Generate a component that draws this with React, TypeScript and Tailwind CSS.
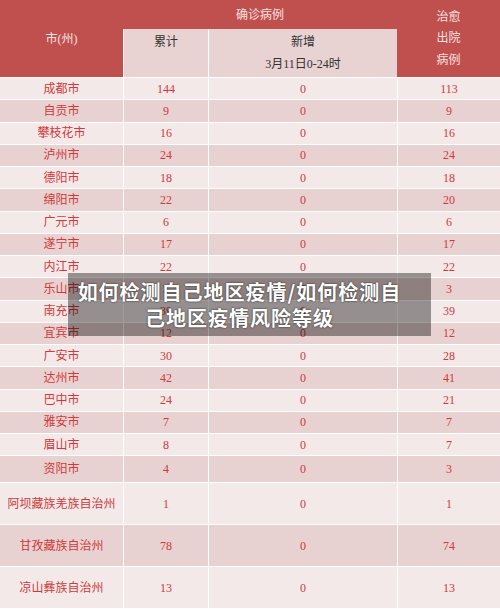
import React from 'react';

type Row = [string, string, string, string];

const rows: Row[] = [
  ['成都市', '144', '0', '113'],
  ['自贡市', '9', '0', '9'],
  ['攀枝花市', '16', '0', '16'],
  ['泸州市', '24', '0', '24'],
  ['德阳市', '18', '0', '18'],
  ['绵阳市', '22', '0', '20'],
  ['广元市', '6', '0', '6'],
  ['遂宁市', '17', '0', '17'],
  ['内江市', '22', '0', '22'],
  ['乐山市', '3', '0', '3'],
  ['南充市', '39', '0', '39'],
  ['宜宾市', '12', '0', '12'],
  ['广安市', '30', '0', '28'],
  ['达州市', '42', '0', '41'],
  ['巴中市', '24', '0', '21'],
  ['雅安市', '7', '0', '7'],
  ['眉山市', '8', '0', '7'],
];

const tall: Row[] = [
  ['阿坝藏族羌族自治州', '1', '0', '1'],
  ['甘孜藏族自治州', '78', '0', '74'],
  ['凉山彝族自治州', '13', '0', '13'],
];

const font = { fontFamily: '"Liberation Serif", "Noto Sans CJK SC", serif' };

const DataRow = ({ row, index, height }: { row: Row; index: number; height: string }) => (
  <div
    className={`grid grid-cols-[123px_84px_188px_1fr] gap-x-px text-[12px] text-[#d03a3a] ${height}`}
  >
    {row.map((cell, i) => (
      <div
        key={i}
        className={`flex items-center justify-center ${index % 2 === 0 ? 'bg-[#f3e9e9]' : 'bg-[#e8d1d1]'}`}
      >
        {cell}
      </div>
    ))}
  </div>
);

export default function App() {
  return (
    <div className="relative w-[500px] h-[609px] overflow-hidden bg-white" style={font}>
      {/* header */}
      <div className="flex h-[77px] bg-[#c0504d] text-[12px] text-[#f8e2e2]">
        <div className="w-[123px] flex items-center justify-center">市(州)</div>
        <div className="w-[274px] flex flex-col">
          <div className="h-[29px] flex items-center justify-center">确诊病例</div>
          <div className="flex-1 flex gap-x-px bg-white pl-px text-[#333]">
            <div className="w-[84px] bg-[#e8d2d2] pt-[3px] text-center leading-[21.5px]">累计</div>
            <div className="flex-1 bg-[#e8d2d2] pt-[3px] text-center leading-[21.5px]">
              <div>新增</div>
              <div>3月11日0-24时</div>
            </div>
          </div>
        </div>
        <div className="flex-1 flex flex-col items-center justify-center leading-[21.5px] pt-px">
          <div>治愈</div>
          <div>出院</div>
          <div>病例</div>
        </div>
      </div>

      {/* body */}
      <div className="flex flex-col gap-y-px pt-px">
        {rows.map((r, i) => (
          <DataRow key={r[0]} row={r} index={i} height="h-[21.25px]" />
        ))}
        <DataRow row={['资阳市', '4', '0', '3']} index={17} height="h-[26px]" />
        {tall.map((r, i) => (
          <DataRow key={r[0]} row={r} index={18 + i} height="h-[41px]" />
        ))}
      </div>

      {/* title overlay */}
      <div className="absolute left-[68px] top-[273px] w-[363px] h-[63px] bg-[rgba(0,0,0,0.385)] flex flex-col items-center justify-center pr-[20px]">
        <p
          className="text-white font-bold text-[20px] leading-[26px] tracking-[1px] text-center [text-shadow:0_0_2px_rgba(0,0,0,0.8)]"
          style={{ fontFamily: '"Noto Sans CJK SC", sans-serif' }}
        >
          如何检测自己地区疫情/如何检测自
          <br />
          己地区疫情风险等级
        </p>
      </div>
    </div>
  );
}
